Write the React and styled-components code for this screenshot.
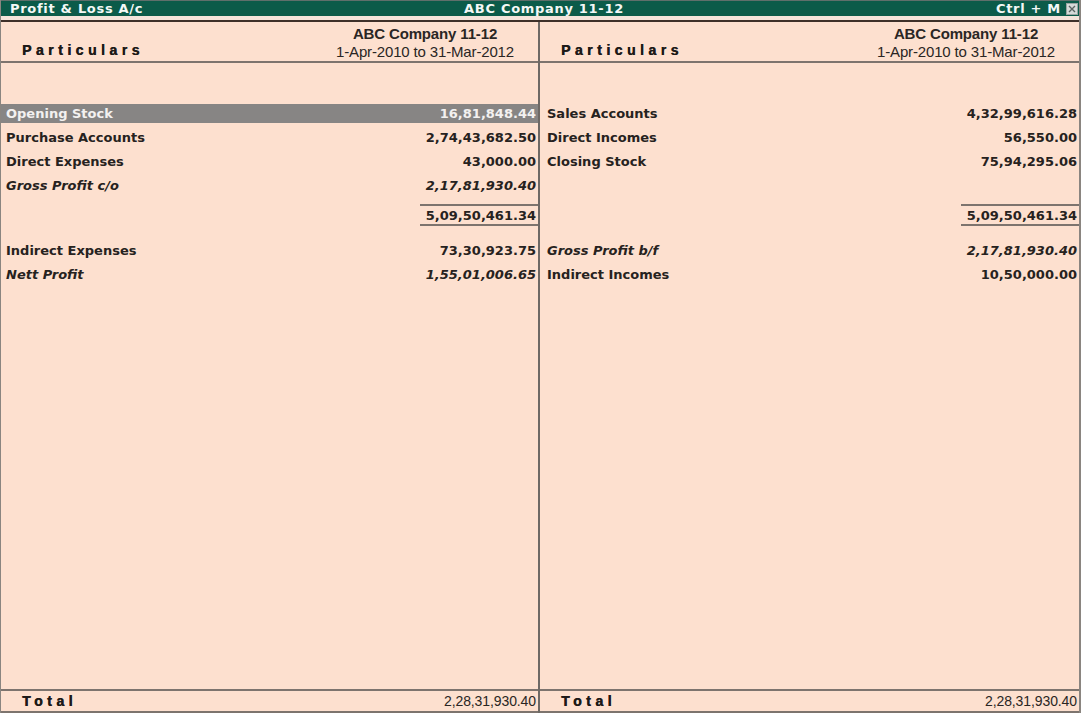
import React from 'react';
import styled, { createGlobalStyle } from 'styled-components';

const GlobalStyle = createGlobalStyle`
  html, body {
    margin: 0;
    padding: 0;
    background: #fde0cf;
  }
  * {
    box-sizing: border-box;
  }
`;

const Window = styled.div`
  width: 1081px;
  height: 713px;
  display: flex;
  flex-direction: column;
  background: #fde0cf;
  border-left: 1px solid #8a8580;
  border-right: 2px solid #8a8580;
  overflow: hidden;
`;

const TitleBar = styled.div`
  height: 16px;
  flex: none;
  display: grid;
  grid-template-columns: 1fr auto 1fr;
  align-items: center;
  padding: 0 1px 0 9px;
  background: #0b5b49;
  border-top: 1px solid #5f6f6b;
  color: #f4f8f6;
  font-family: 'DejaVu Sans', Verdana, sans-serif;
  font-weight: bold;
  font-size: 13px;
  letter-spacing: 0.7px;
  line-height: 15px;
  white-space: nowrap;
`;

const TitleRight = styled.div`
  display: flex;
  justify-content: flex-end;
  align-items: center;
  gap: 5px;
`;

const CloseBox = styled.span`
  width: 12px;
  height: 12px;
  display: flex;
  align-items: center;
  justify-content: center;
  background: #d6dad8;
  border: 1px solid #9aa5a2;
`;

const Strip = styled.div`
  height: 6px;
  flex: none;
  background: #f4e4da;
  border-bottom: 2px solid #3e3029;
`;

const Columns = styled.div`
  flex: 1;
  display: grid;
  grid-template-columns: 539px 1fr;
  min-height: 0;
`;

const Panel = styled.div`
  display: flex;
  flex-direction: column;
  border-right: ${p => (p.$divider ? '2px solid #6e6965' : 'none')};
  min-height: 0;
`;

const Header = styled.div`
  height: 41px;
  flex: none;
  display: flex;
  justify-content: space-between;
  border-bottom: 2px solid #7d746e;
`;

const Caption = styled.div`
  align-self: flex-end;
  padding: 0 0 2px 21px;
  font-family: 'Liberation Sans', Arial, sans-serif;
  font-weight: bold;
  font-size: 14px;
  letter-spacing: 4.5px;
  color: #1d1a18;
  line-height: 18px;
  text-shadow: 0.4px 0 0 #1d1a18;
`;

const PeriodHead = styled.div`
  width: 226px;
  padding-top: 3px;
  text-align: center;
  font-family: 'Liberation Sans', Arial, sans-serif;
  font-size: 15px;
  line-height: 18px;
  color: #2a2624;
  letter-spacing: -0.15px;
  b {
    display: block;
    font-weight: bold;
  }
`;

const Body = styled.div`
  flex: 1;
  padding-top: 41px;
  font-family: 'DejaVu Sans', Verdana, sans-serif;
  font-weight: bold;
  font-size: 13px;
  color: #262220;
`;

const Row = styled.div`
  height: 19px;
  margin-bottom: 5px;
  display: flex;
  justify-content: space-between;
  align-items: center;
  padding: 0 2px 0 ${p => p.$indent}px;
  background: ${p => (p.$active ? '#878584' : 'transparent')};
  color: ${p => (p.$active ? '#f3f1f0' : 'inherit')};
  white-space: nowrap;
`;

const Label = styled.span`
  font-style: ${p => (p.$italic ? 'italic' : 'normal')};
`;

const Amount = styled.span`
  font-style: ${p => (p.$italic ? 'italic' : 'normal')};
`;

const SubTotalRow = styled.div`
  display: flex;
  justify-content: flex-end;
  margin: 9px 0 15px;
`;

const SubTotal = styled.div`
  width: 118px;
  height: 22px;
  padding-right: 2px;
  display: flex;
  align-items: center;
  justify-content: flex-end;
  border-top: 2px solid #7d746e;
  border-bottom: 2px solid #7d746e;
`;

const Footer = styled.div`
  height: 24px;
  flex: none;
  display: flex;
  justify-content: space-between;
  align-items: center;
  border-top: 2px solid #7d746e;
  border-bottom: 2px solid #7d746e;
`;

const TotalLabel = styled.span`
  padding-left: 21px;
  font-family: 'Liberation Sans', Arial, sans-serif;
  font-weight: bold;
  font-size: 14px;
  letter-spacing: 4.5px;
  color: #1d1a18;
  text-shadow: 0.4px 0 0 #1d1a18;
`;

const TotalAmount = styled.span`
  padding-right: 2px;
  font-family: 'Liberation Sans', Arial, sans-serif;
  font-size: 14px;
  letter-spacing: -0.1px;
  color: #2a2624;
`;

const expenses = {
  indent: 5,
  top: [
    { label: 'Opening Stock', amount: '16,81,848.44', active: true },
    { label: 'Purchase Accounts', amount: '2,74,43,682.50' },
    { label: 'Direct Expenses', amount: '43,000.00' },
    { label: 'Gross Profit c/o', amount: '2,17,81,930.40', italic: true, italicAmount: true },
  ],
  subtotal: '5,09,50,461.34',
  bottom: [
    { label: 'Indirect Expenses', amount: '73,30,923.75' },
    { label: 'Nett Profit', amount: '1,55,01,006.65', italic: true, italicAmount: true },
  ],
  total: '2,28,31,930.40',
};

const incomes = {
  indent: 7,
  top: [
    { label: 'Sales Accounts', amount: '4,32,99,616.28' },
    { label: 'Direct Incomes', amount: '56,550.00' },
    { label: 'Closing Stock', amount: '75,94,295.06' },
    { label: '', amount: '' },
  ],
  subtotal: '5,09,50,461.34',
  bottom: [
    { label: 'Gross Profit b/f', amount: '2,17,81,930.40', italic: true, italicAmount: true },
    { label: 'Indirect Incomes', amount: '10,50,000.00' },
  ],
  total: '2,28,31,930.40',
};

const renderRow = (row, indent) => (
  <Row key={row.label || 'blank'} $indent={indent} $active={row.active}>
    <Label $italic={row.italic}>{row.label}</Label>
    <Amount $italic={row.italicAmount}>{row.amount}</Amount>
  </Row>
);

const Side = ({ data, divider }) => (
  <Panel $divider={divider}>
    <Header>
      <Caption>Particulars</Caption>
      <PeriodHead>
        <b>ABC Company 11-12</b>
        1-Apr-2010 to 31-Mar-2012
      </PeriodHead>
    </Header>
    <Body>
      {data.top.map(row => renderRow(row, data.indent))}
      <SubTotalRow>
        <SubTotal>{data.subtotal}</SubTotal>
      </SubTotalRow>
      {data.bottom.map(row => renderRow(row, data.indent))}
    </Body>
    <Footer>
      <TotalLabel>Total</TotalLabel>
      <TotalAmount>{data.total}</TotalAmount>
    </Footer>
  </Panel>
);

export default function App() {
  return (
    <>
      <GlobalStyle />
      <Window>
        <TitleBar>
          <span>Profit &amp; Loss A/c</span>
          <span>ABC Company 11-12</span>
          <TitleRight>
            <span>Ctrl + M</span>
            <CloseBox>
              <svg width="8" height="8" viewBox="0 0 8 8">
                <path d="M1 1 L7 7 M7 1 L1 7" stroke="#5a6462" strokeWidth="1.4" />
              </svg>
            </CloseBox>
          </TitleRight>
        </TitleBar>
        <Strip />
        <Columns>
          <Side data={expenses} divider />
          <Side data={incomes} />
        </Columns>
      </Window>
    </>
  );
}
